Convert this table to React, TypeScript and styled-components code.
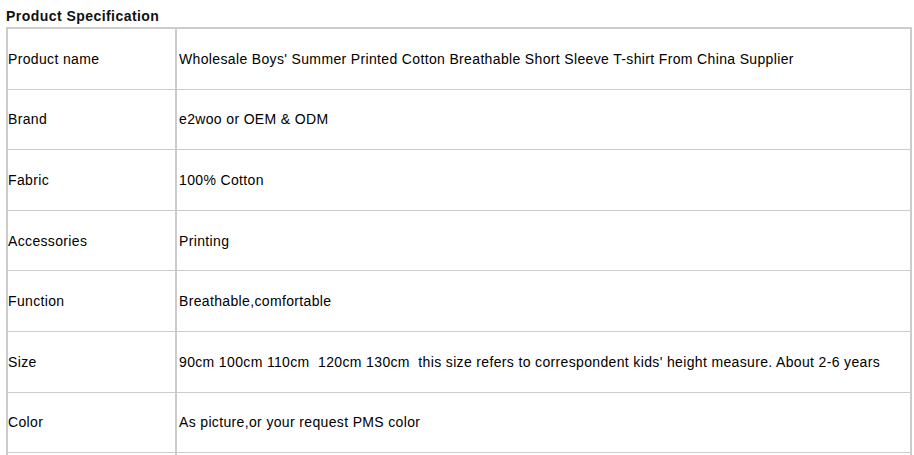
import React from "react";
import styled, { createGlobalStyle } from "styled-components";

const Global = createGlobalStyle`
  html, body { margin: 0; padding: 0; background: #fff; }
  body { font-family: "Liberation Sans", Arial, sans-serif; color: #000; }
`;

const Page = styled.div`
  padding: 8px 3px 0 6px;
`;

const Title = styled.div`
  font-family: "Liberation Sans", Arial, sans-serif;
  font-weight: bold;
  font-size: 14px;
  letter-spacing: 0.45px;
  line-height: 17px;
  color: #111;
  height: 19px;
`;

const Table = styled.table`
  width: 906px;
  border-collapse: separate;
  border-spacing: 0;
  border-top: 2px solid #cccccc;
  border-left: 2px solid #cccccc;
  border-right: 2px solid #cccccc;
`;

const Cell = styled.td<{ $first?: boolean }>`
  width: ${(p) => (p.$first ? "167px" : "auto")};
  height: 59.6px;
  padding: ${(p) => (p.$first ? "0" : "0 0 0 2px")};
  font-size: 14px;
  letter-spacing: 0.35px;
  line-height: 16px;
  vertical-align: middle;
  border-bottom: 1px solid #cccccc;
  border-right: ${(p) => (p.$first ? "2px solid #cccccc" : "none")};
  white-space: nowrap;
`;

const rows: [string, string][] = [
  ["Product name", "Wholesale Boys' Summer Printed Cotton Breathable Short Sleeve T-shirt From China Supplier"],
  ["Brand", "e2woo or OEM & ODM"],
  ["Fabric", "100% Cotton"],
  ["Accessories", "Printing"],
  ["Function", "Breathable,comfortable"],
  ["Size", "90cm 100cm 110cm\u00a0 120cm 130cm\u00a0 this size refers to correspondent kids' height measure. About 2-6 years"],
  ["Color", "As picture,or your request PMS color"],
  ["", ""],
];

export default function App() {
  return (
    <>
      <Global />
      <Page>
        <Title>Product Specification</Title>
        <Table>
          <tbody>
            {rows.map(([k, v], i) => (
              <tr key={i}>
                <Cell $first>{k}</Cell>
                <Cell>{v}</Cell>
              </tr>
            ))}
          </tbody>
        </Table>
      </Page>
    </>
  );
}
